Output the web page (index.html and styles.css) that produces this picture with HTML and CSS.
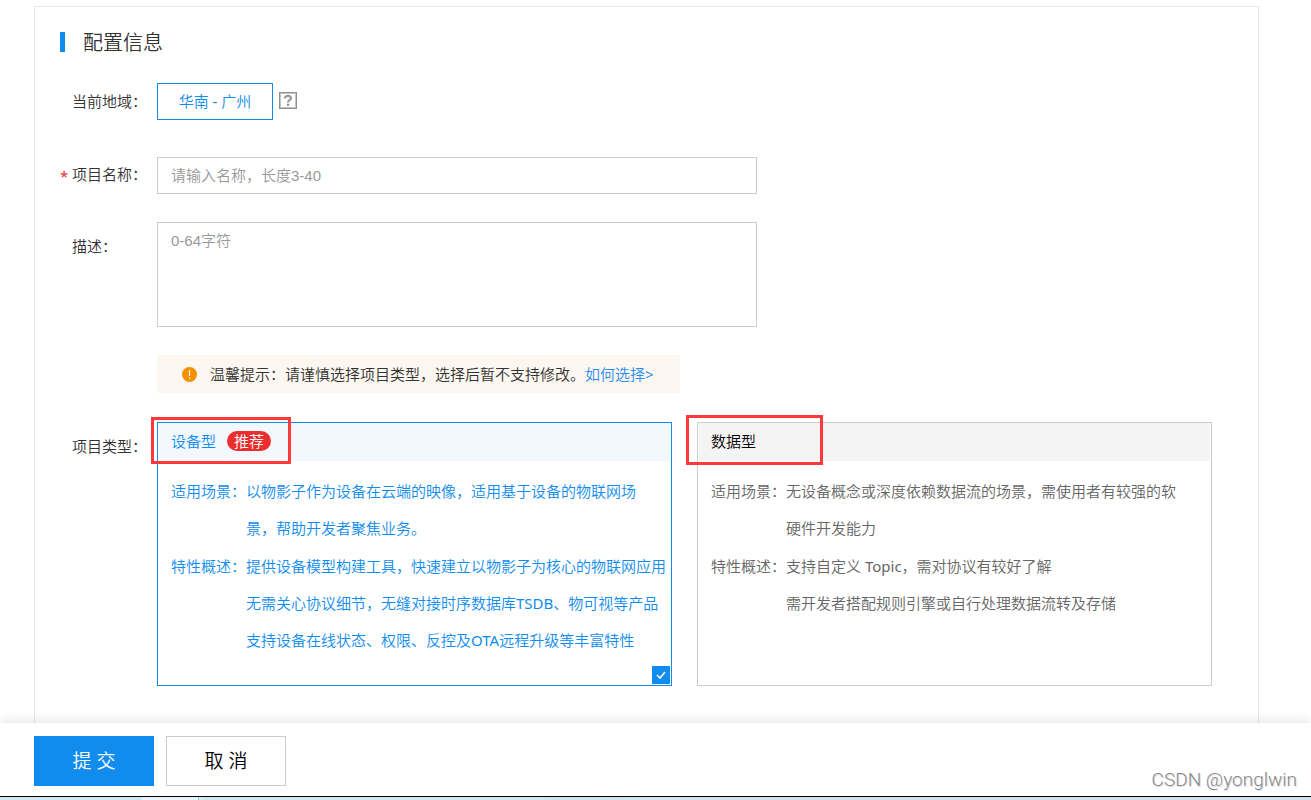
FILE: index.html
```html
<!DOCTYPE html>
<html lang="zh-CN">
<head>
<meta charset="utf-8">
<title>配置信息</title>
<link rel="stylesheet" href="styles.css">
</head>
<body>
<form class="page">
  <main class="panel">
    <h1 class="title">配置信息</h1>

    <div class="row row-region">
      <span class="label" id="region-label">当前地域：</span>
      <div class="field region">
        <button type="button" class="region-btn" aria-describedby="region-label">华南<span class="latin"> - </span>广州</button>
        <button type="button" class="help" aria-label="帮助">
          <svg width="18" height="17" viewBox="0 0 18 17"><rect x="0.500" y="0.500" width="17" height="16" fill="none" stroke="#8f8f8f"/><rect x="1.500" y="1.500" width="15" height="14" fill="none" stroke="#c4c4c4"/><path d="M6 6.400C6 4.500 7.300 3.800 9 3.800s3 .8 3 2.500C12 8 9.100 8 9.100 10.400" fill="none" stroke="#999" stroke-width="2.200"/><rect x="8" y="11.800" width="2.200" height="2.200" fill="#999"/></svg>
        </button>
      </div>
    </div>

    <div class="row">
      <label class="label required" for="name">项目名称：</label>
      <input class="field text" id="name" type="text" placeholder="请输入名称，长度3-40" required>
    </div>

    <div class="row">
      <label class="label label-low" for="desc">描述：</label>
      <textarea class="field text area" id="desc" placeholder="0-64字符"></textarea>
    </div>

    <div class="row">
      <span class="label"></span>
      <p class="tip">
        <svg class="tip-icon" width="15" height="15" viewBox="0 0 15 15"><circle cx="7.500" cy="7.500" r="7.500" fill="#f39000"/><path d="M7.500 3v6M7.500 10.200v1.600" stroke="#fff" stroke-width="1.200"/></svg>
        <span>温馨提示：请谨慎选择项目类型，选择后暂不支持修改。<a href="#choose">如何选择<span class="latin">&gt;</span></a></span>
      </p>
    </div>

    <div class="row">
      <span class="label label-low" id="type-label">项目类型：</span>
      <div class="cards" role="radiogroup" aria-labelledby="type-label">
        <label class="card selected">
          <span class="card-head">设备型<span class="badge">推荐</span></span>
          <span class="card-body">
            <span class="item"><span>适用场景：</span><span>以物影子作为设备在云端的映像，适用基于设备的物联网场<br>景，帮助开发者聚焦业务。</span></span>
            <span class="item"><span>特性概述：</span><span>提供设备模型构建工具，快速建立以物影子为核心的物联网应用<br>无需关心协议细节，无缝对接时序数据库<span class="latin">TSDB</span>、物可视等产品<br>支持设备在线状态、权限、反控及<span class="latin">OTA</span>远程升级等丰富特性</span></span>
          </span>
          <input class="pick" type="radio" name="type" checked>
          <svg class="tick" width="18" height="18" viewBox="0 0 18 18"><path d="M5 9l3 3 5-6" fill="none" stroke="#fff" stroke-width="1.600"/></svg>
          <span class="mark mark-device"></span>
        </label>
        <label class="card">
          <span class="card-head">数据型</span>
          <span class="card-body">
            <span class="item"><span>适用场景：</span><span>无设备概念或深度依赖数据流的场景，需使用者有较强的软<br>硬件开发能力</span></span>
            <span class="item"><span>特性概述：</span><span>支持自定义<span class="latin"> Topic</span>，需对协议有较好了解<br>需开发者搭配规则引擎或自行处理数据流转及存储</span></span>
          </span>
          <input class="pick" type="radio" name="type">
          <span class="mark mark-data"></span>
        </label>
      </div>
    </div>
  </main>

  <footer class="footer">
    <button type="submit" class="btn primary">提 交</button>
    <button type="button" class="btn">取 消</button>
    <span class="watermark">CSDN @yonglwin</span>
  </footer>
  <div class="strip"></div>
</form>
</body>
</html>
```
FILE: styles.css
```css
* { box-sizing: border-box; }

body {
  margin: 0;
  background: #fff;
  color: #333;
  font: 350 15px/20px "Noto Sans", "Noto Sans CJK SC", sans-serif;
}

button, input, textarea { font: inherit; }
a { color: #2d8cf0; text-decoration: none; }
.latin { font-weight: 400; }

.page {
  display: flex;
  flex-direction: column;
  min-height: 100vh;
}

.panel {
  flex: 1;
  display: flex;
  flex-direction: column;
  gap: 28px;
  margin: 6px 52px 0 34px;
  padding: 25px 46px 36px 25px;
  border: 1px solid #e8e8e8;
  border-bottom: 0;
}

.title {
  height: 20px;
  margin: 0 0 3px;
  padding-left: 18px;
  border-left: 5px solid #108cee;
  font-size: 20px;
  font-weight: 350;
  line-height: 22px;
}

.row { display: flex; align-items: flex-start; }
.row-region { margin-bottom: 9px; }

.label {
  flex: none;
  width: 97px;
  padding: 8px 0 0 12px;
  white-space: nowrap;
}

.label-low { padding-top: 14px; }

.required { padding: 7px 0 0; }

.required::before {
  content: "*";
  display: inline-block;
  width: 12px;
  color: #ea2e2e;
  font-weight: 400;
  vertical-align: -2px;
}

.region { display: flex; align-items: center; gap: 6px; }

.region-btn {
  min-width: 116px;
  height: 37px;
  padding: 0 20px 2px;
  border: 1px solid #108cee;
  background: #fff;
  color: #108cee;
}

.help {
  display: flex;
  padding: 0 0 2px;
  border: 0;
  background: none;
}

.text {
  width: 600px;
  height: 37px;
  padding: 0 13px;
  border: 1px solid #ccc;
  border-radius: 0;
  background: #fff;
  color: #333;
  font-family: "Liberation Sans", "Noto Sans CJK SC", sans-serif;
}

.text::placeholder { color: #999; opacity: 1; }

.area {
  display: block;
  height: 105px;
  padding: 8px 13px;
  resize: none;
}

.tip {
  display: flex;
  align-items: center;
  gap: 13px;
  height: 38px;
  margin: 0 0 1px;
  padding: 0 26px 0 25px;
  background: #fcf7f1;
}

.cards {
  flex: 1;
  display: grid;
  grid-template-columns: 1fr 1fr;
  gap: 25px;
}

.card {
  position: relative;
  display: block;
  min-width: 0;
  border: 1px solid #ccc;
  color: #666;
  white-space: nowrap;
}

.card-head {
  display: flex;
  align-items: center;
  gap: 11px;
  height: 38px;
  margin: 0 1px;
  padding: 0 12px 2px;
  background: #f4f4f4;
  color: #000;
}

.card-body {
  display: flex;
  flex-direction: column;
  gap: 1px;
  padding: 12px 0 26px 13px;
  line-height: 37px;
}

.item { display: flex; }

.selected { border-color: #108cee; color: #108cee; }
.selected .card-head { background: #f3f8ff; color: #108cee; }

.badge {
  padding: 0 7px;
  border-radius: 10px;
  background: #ea2e2e;
  color: #fff;
}

.pick {
  position: absolute;
  right: 1px;
  bottom: 1px;
  width: 18px;
  height: 18px;
  margin: 0;
  appearance: none;
}

.pick:checked { background: #108cee; }

.tick {
  position: absolute;
  right: 1px;
  bottom: 1px;
}

.mark {
  position: absolute;
  border: 3px solid #ff3939;
  pointer-events: none;
}

.mark-device { left: -7px; top: -6px; width: 140px; height: 47px; }
.mark-data { left: -12px; top: -8px; width: 137px; height: 50px; }

.footer {
  display: flex;
  align-items: center;
  gap: 12px;
  padding: 13px 14px 10px 34px;
  background: #fff;
  box-shadow: 0 -1px 12px rgba(0, 0, 0, .12);
  position: relative;
}

.btn {
  width: 120px;
  height: 50px;
  border: 1px solid #ccc;
  background: #fff;
  color: #000;
  font-size: 19px;
}

.primary {
  border-color: #108cee;
  background: #108cee;
  color: #fff;
}

.watermark {
  align-self: flex-end;
  height: 16px;
  margin-left: auto;
  color: #888;
  font: 300 19px/20px Roboto, sans-serif;
  text-shadow: 1px 1px 0 #ddd;
}

.strip {
  position: relative;
  height: 4px;
  border-top: 1px solid #000;
  background: linear-gradient(90deg, #cfe7f1 142px, #eaf4fb 142px 198px, #a9bcc4 198px 199px, #d8eaf2 199px 203px, #cfe7f1 203px, #d3dfef);
}
```
